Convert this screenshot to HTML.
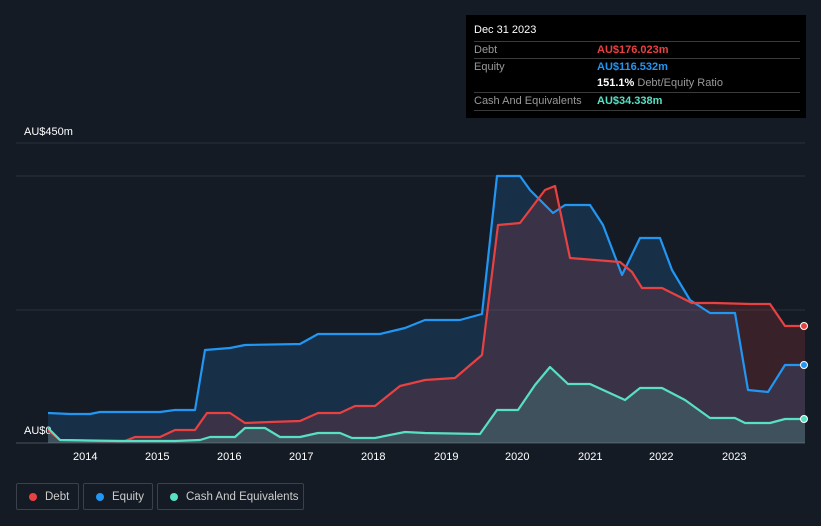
<!DOCTYPE html>
<html><head><style>
body{margin:0;width:821px;height:526px;background:#151b25;font-family:"Liberation Sans",sans-serif;overflow:hidden;position:relative}
.tip{position:absolute;left:466px;top:15px;width:340px;height:103px;background:#000;color:#fff;font-size:11px}
.row{position:absolute;left:8px;width:326px;border-top:1px solid #3a3a3a;height:17px;line-height:17px}
.row span{position:absolute;left:123px}
.lbl{color:#999}
.leg{position:absolute;top:483px;height:27px;border:1px solid #3b414b;border-radius:2px;color:#ccc;font-size:11.5px;line-height:26px;box-sizing:border-box;padding-left:28px;white-space:nowrap}
.leg i{position:absolute;left:12px;top:9px;width:8px;height:8px;border-radius:50%}
</style></head><body>
<svg width="821" height="526" style="position:absolute;left:0;top:0">
<line x1="16" y1="143" x2="805" y2="143" stroke="#2a313c"/>
<line x1="16" y1="176" x2="805" y2="176" stroke="#2a313c"/>
<line x1="16" y1="310" x2="805" y2="310" stroke="#2a313c"/>
<line x1="16" y1="443" x2="805" y2="443" stroke="#4a505a"/>
<g font-size="11" fill="#fff">
<text x="24" y="135">AU$450m</text><text x="24" y="434">AU$0</text>
<text x="73" y="460">2014</text><text x="145" y="460">2015</text><text x="217" y="460">2016</text><text x="289" y="460">2017</text><text x="361" y="460">2018</text><text x="434" y="460">2019</text><text x="505" y="460">2020</text><text x="578" y="460">2021</text><text x="649" y="460">2022</text><text x="722" y="460">2023</text>
</g>
<polygon fill="rgba(33,150,243,0.17)" points="48,443 48,413 70,414 90,414 100,412 130,412 160,412 175,410 195,410 205,350 230,348 245,345 300,344 318,334 380,334 405,328 425,320 460,320 482,314 497,176 520,176 530,190 553,213 565,205 590,205 603,225 622,275 640,238 660,238 672,270 690,300 710,313 735,313 748,390 768,392 785,365 805,365 805,443"/>
<polygon fill="rgba(232,65,66,0.17)" points="48,443 48,430 60,440 100,441 125,441 135,437 160,437 175,430 195,430 207,413 230,413 245,423 270,422 300,421 318,413 340,413 355,406 375,406 400,386 425,380 455,378 482,355 498,225 520,223 545,190 555,186 570,258 620,262 632,272 642,288 662,288 692,303 715,303 750,304 770,304 785,326 805,326 805,443"/>
<polygon fill="rgba(88,224,195,0.18)" points="48,443 48,428 60,440 120,441 175,441 200,440 210,437 235,437 245,428 265,428 280,437 300,437 318,433 340,433 352,438 375,438 405,432 425,433 480,434 497,410 518,410 535,385 550,367 568,384 590,384 625,400 640,388 662,388 685,400 710,418 735,418 745,423 770,423 785,419 805,419 805,443"/>
<g fill="none" stroke-width="2.2" stroke-linejoin="round">
<polyline stroke="#2196f3" points="48,413 70,414 90,414 100,412 130,412 160,412 175,410 195,410 205,350 230,348 245,345 300,344 318,334 380,334 405,328 425,320 460,320 482,314 497,176 520,176 530,190 553,213 565,205 590,205 603,225 622,275 640,238 660,238 672,270 690,300 710,313 735,313 748,390 768,392 785,365 805,365"/>
<polyline stroke="#e84142" points="48,430 60,440 100,441 125,441 135,437 160,437 175,430 195,430 207,413 230,413 245,423 270,422 300,421 318,413 340,413 355,406 375,406 400,386 425,380 455,378 482,355 498,225 520,223 545,190 555,186 570,258 620,262 632,272 642,288 662,288 692,303 715,303 750,304 770,304 785,326 805,326"/>
<polyline stroke="#58e0c3" points="48,428 60,440 120,441 175,441 200,440 210,437 235,437 245,428 265,428 280,437 300,437 318,433 340,433 352,438 375,438 405,432 425,433 480,434 497,410 518,410 535,385 550,367 568,384 590,384 625,400 640,388 662,388 685,400 710,418 735,418 745,423 770,423 785,419 805,419"/>
</g>
<circle cx="804" cy="326" r="3.5" fill="#e84142" stroke="#fff"/>
<circle cx="804" cy="365" r="3.5" fill="#2196f3" stroke="#fff"/>
<circle cx="804" cy="419" r="3.5" fill="#58e0c3" stroke="#fff"/>
</svg>
<div class="tip">
<div style="position:absolute;left:8px;top:9px">Dec 31 2023</div>
<div class="row" style="top:26px"><a class="lbl">Debt</a><span style="color:#e84142;font-weight:bold">AU$176.023m</span></div>
<div class="row" style="top:43px"><a class="lbl">Equity</a><span style="color:#2196f3;font-weight:bold">AU$116.532m</span></div>
<div class="row" style="top:60px;border-top:none"><span><b>151.1%</b> <a class="lbl">Debt/Equity Ratio</a></span></div>
<div class="row" style="top:77px;border-bottom:1px solid #3a3a3a"><a class="lbl">Cash And Equivalents</a><span style="color:#58e0c3;font-weight:bold">AU$34.338m</span></div>
</div>
<div class="leg" style="left:16px;width:63px"><i style="background:#e84142"></i>Debt</div>
<div class="leg" style="left:83px;width:70px"><i style="background:#2196f3"></i>Equity</div>
<div class="leg" style="left:157px;width:147px"><i style="background:#58e0c3"></i>Cash And Equivalents</div>
</body></html>
